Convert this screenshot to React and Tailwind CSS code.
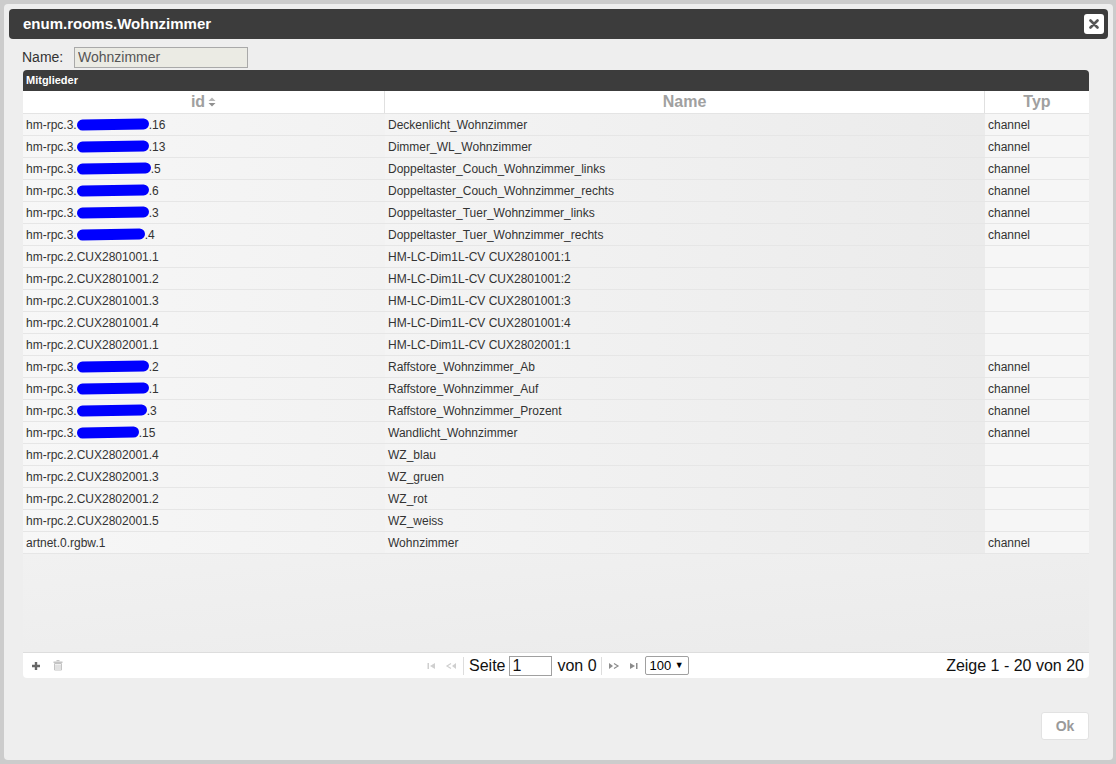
import React from "react";

const rows = [
  { pre: "hm-rpc.3.", blob: 72, post: ".16", name: "Deckenlicht_Wohnzimmer", typ: "channel" },
  { pre: "hm-rpc.3.", blob: 72, post: ".13", name: "Dimmer_WL_Wohnzimmer", typ: "channel" },
  { pre: "hm-rpc.3.", blob: 74, post: ".5", name: "Doppeltaster_Couch_Wohnzimmer_links", typ: "channel" },
  { pre: "hm-rpc.3.", blob: 72, post: ".6", name: "Doppeltaster_Couch_Wohnzimmer_rechts", typ: "channel" },
  { pre: "hm-rpc.3.", blob: 72, post: ".3", name: "Doppeltaster_Tuer_Wohnzimmer_links", typ: "channel" },
  { pre: "hm-rpc.3.", blob: 68, post: ".4", name: "Doppeltaster_Tuer_Wohnzimmer_rechts", typ: "channel" },
  { id: "hm-rpc.2.CUX2801001.1", name: "HM-LC-Dim1L-CV CUX2801001:1", typ: "" },
  { id: "hm-rpc.2.CUX2801001.2", name: "HM-LC-Dim1L-CV CUX2801001:2", typ: "" },
  { id: "hm-rpc.2.CUX2801001.3", name: "HM-LC-Dim1L-CV CUX2801001:3", typ: "" },
  { id: "hm-rpc.2.CUX2801001.4", name: "HM-LC-Dim1L-CV CUX2801001:4", typ: "" },
  { id: "hm-rpc.2.CUX2802001.1", name: "HM-LC-Dim1L-CV CUX2802001:1", typ: "" },
  { pre: "hm-rpc.3.", blob: 72, post: ".2", name: "Raffstore_Wohnzimmer_Ab", typ: "channel" },
  { pre: "hm-rpc.3.", blob: 72, post: ".1", name: "Raffstore_Wohnzimmer_Auf", typ: "channel" },
  { pre: "hm-rpc.3.", blob: 70, post: ".3", name: "Raffstore_Wohnzimmer_Prozent", typ: "channel" },
  { pre: "hm-rpc.3.", blob: 62, post: ".15", name: "Wandlicht_Wohnzimmer", typ: "channel" },
  { id: "hm-rpc.2.CUX2802001.4", name: "WZ_blau", typ: "" },
  { id: "hm-rpc.2.CUX2802001.3", name: "WZ_gruen", typ: "" },
  { id: "hm-rpc.2.CUX2802001.2", name: "WZ_rot", typ: "" },
  { id: "hm-rpc.2.CUX2802001.5", name: "WZ_weiss", typ: "" },
  { id: "artnet.0.rgbw.1", name: "Wohnzimmer", typ: "channel" },
];

function IdCell({ r }) {
  if (r.id) return <span>{r.id}</span>;
  return (
    <span className="whitespace-nowrap">
      {r.pre}
      <span
        className="inline-block h-[11px] rounded-full bg-[#0000fe] align-middle -rotate-1 -mt-[2px]"
        style={{ width: r.blob }}
      ></span>
      {r.post}
    </span>
  );
}

function PagerIcon({ dir, last, color }) {
  return (
    <svg width="12" height="8" viewBox="0 0 12 8" className={dir === "r" ? "" : "scale-x-[-1]"}>
      {last ? (
        <>
          <path d="M2 1 L7 4 L2 7 Z" fill={color} />
          <rect x="8" y="1" width="1.5" height="6" fill={color} />
        </>
      ) : (
        <>
          <path d="M1 1 L5 4 L1 7 Z" fill={color} />
          <path d="M6 1.5 L10 4 L6 6.5" stroke={color} strokeWidth="1.2" fill="none" />
        </>
      )}
    </svg>
  );
}

export default function App() {
  return (
    <div className="h-[764px] w-[1116px] bg-[#cccccc] pt-[4px] pl-[4px] font-['Liberation_Sans',Arial,sans-serif] overflow-hidden">
      <div className="w-[1109px] h-[756px] bg-[#eeeeee] rounded-[4px] p-[5px] flex flex-col">
        {/* title bar */}
        <div className="h-[30px] bg-[#3c3c3c] rounded-[4px] flex items-center justify-between pl-[14px] pr-[4px]">
          <span className="text-white font-bold text-[15px]">enum.rooms.Wohnzimmer</span>
          <button className="w-[20px] h-[20px] bg-white rounded-[3px] flex items-center justify-center">
            <svg width="10" height="10" viewBox="0 0 10 10">
              <path d="M1.5 1.5 L8.5 8.5 M8.5 1.5 L1.5 8.5" stroke="#555" strokeWidth="2.6" strokeLinecap="round" />
            </svg>
          </button>
        </div>

        <div className="pl-[14px] pr-[19px] flex flex-col">
          {/* name row */}
          <div className="flex items-center mt-[8px] h-[21px]">
            <span className="text-[14px] text-[#333] w-[52px] -ml-[1px]">Name:</span>
            <input
              readOnly
              value="Wohnzimmer"
              className="w-[174px] h-[21px] bg-[#ebebe4] border border-[#a9a9a9] text-[14px] text-[#555] px-[3px] outline-none"
            />
          </div>

          {/* grid */}
          <div className="mt-[2px] h-[608px] flex flex-col">
            <div className="h-[21px] bg-[#3c3c3c] rounded-t-[4px] flex items-center pl-[3px]">
              <span className="text-white font-bold text-[11px]">Mitglieder</span>
            </div>
            <div className="flex h-[23px] bg-white border-b border-[#e4e4e4] text-[16px] font-bold text-[#a0a0a0]">
              <div className="w-[362px] border-r border-[#e0e0e0] flex items-center justify-center gap-[3px]">
                id
                <svg width="8" height="10" viewBox="0 0 8 10">
                  <path d="M0.5 4 L4 0.5 L7.5 4 Z" fill="#b5b5b5" />
                  <path d="M0.5 6 L4 9.5 L7.5 6 Z" fill="#909090" />
                </svg>
              </div>
              <div className="w-[600px] border-r border-[#e0e0e0] flex items-center justify-center">Name</div>
              <div className="flex-1 flex items-center justify-center">Typ</div>
            </div>
            <div className="flex flex-col text-[12px] text-[#333]">
              {rows.map((r, i) => (
                <div key={i} className="flex h-[22px] border-b border-[#e6e6e6]">
                  <div className="w-[362px] bg-gradient-to-r from-[#f7f7f7] to-[#f2f2f2] flex items-center pl-[3px]">
                    <IdCell r={r} />
                  </div>
                  <div className="w-[600px] bg-gradient-to-r from-[#f4f4f4] to-[#ebebeb] flex items-center pl-[3px]">
                    {r.name}
                  </div>
                  <div className="flex-1 bg-[#f6f6f6] flex items-center pl-[3px]">{r.typ}</div>
                </div>
              ))}
            </div>
            <div className="flex-1 bg-gradient-to-br from-[#f1f1f1] to-[#ebebeb]"></div>
            {/* pager */}
            <div className="h-[26px] bg-white border-t border-[#dddddd] rounded-b-[4px] flex items-center text-[16px] text-[#111]">
              <div className="w-[402px] flex items-center gap-[12px] pl-[8px]">
                <svg width="10" height="10" viewBox="0 0 10 10">
                  <path d="M5 1 V9 M1 5 H9" stroke="#666" strokeWidth="2.4" />
                </svg>
                <svg width="10" height="11" viewBox="0 0 10 11">
                  <rect x="3.5" y="0" width="3" height="1.2" fill="#c4c4c4" />
                  <rect x="0.5" y="1.5" width="9" height="1.5" fill="#c4c4c4" />
                  <path d="M1.5 3.5 H8.5 V10 H1.5 Z M3 4.5 V9 M5 4.5 V9 M7 4.5 V9" stroke="#c4c4c4" strokeWidth="1" fill="none" />
                </svg>
              </div>
              <div className="flex items-center whitespace-nowrap">
                <div className="flex items-center gap-[8px] mr-[6px]">
                  <PagerIcon dir="l" last color="#cfcfcf" />
                  <PagerIcon dir="l" color="#cfcfcf" />
                </div>
                <div className="w-[1px] h-[18px] bg-[#dddddd] mr-[5px]"></div>
                <span>Seite</span>
                <input
                  readOnly
                  value="1"
                  className="w-[43px] h-[20px] border border-[#a0a0a0] text-[16px] px-[2px] ml-[4px] mr-[5px] outline-none"
                />
                <span>von 0</span>
                <div className="w-[1px] h-[18px] bg-[#dddddd] ml-[4px] mr-[6px]"></div>
                <div className="flex items-center gap-[8px] mr-[5px]">
                  <PagerIcon dir="r" color="#8c8c8c" />
                  <PagerIcon dir="r" last color="#8c8c8c" />
                </div>
                <div className="w-[44px] h-[19px] border border-[#a0a0a0] rounded-[2px] flex items-center justify-between px-[4px] text-[13px] text-[#000]">
                  <span>100</span>
                  <span className="text-[9px]">▼</span>
                </div>
              </div>
              <div className="flex-1 text-right pr-[5px]">Zeige 1 - 20 von 20</div>
            </div>
          </div>

          <div className="flex justify-end mt-[34px]">
            <button className="w-[48px] h-[28px] bg-white border border-[#e2e2e2] rounded-[3px] text-[14px] font-bold text-[#9a9a9a]">
              Ok
            </button>
          </div>
        </div>
      </div>
    </div>
  );
}
